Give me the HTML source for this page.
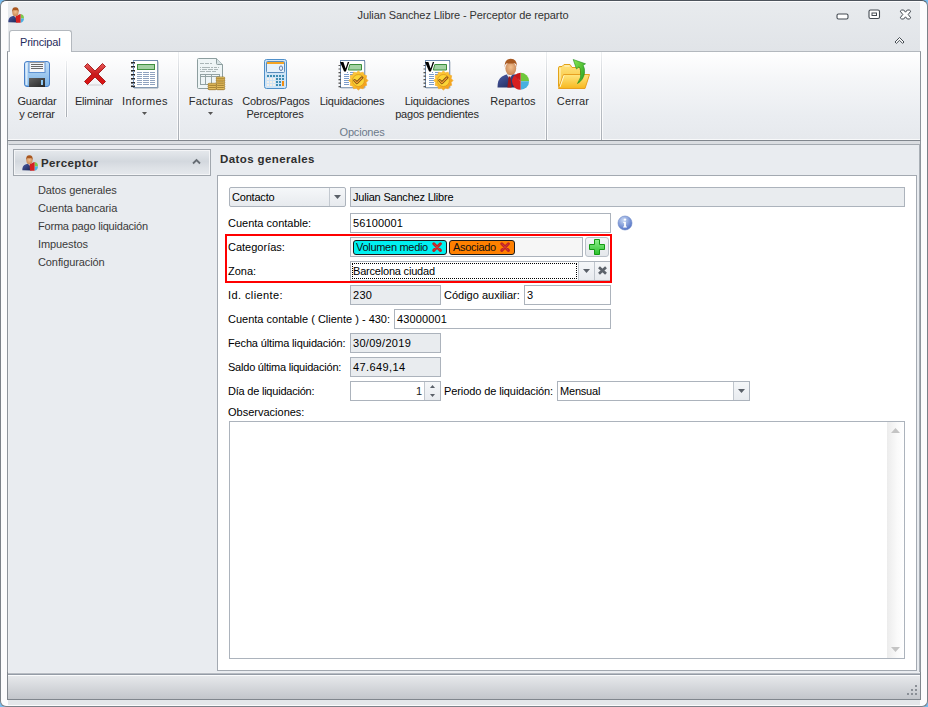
<!DOCTYPE html>
<html><head><meta charset="utf-8">
<style>
*{margin:0;padding:0;box-sizing:border-box}
html,body{width:928px;height:707px;overflow:hidden;background:#78bcef}
body{font-family:"Liberation Sans",sans-serif;font-size:11px;color:#1e1e1e;position:relative}
.a{position:absolute}
.t{position:absolute;white-space:nowrap;line-height:13px;letter-spacing:-0.2px}
.c{text-align:center}
#win{position:absolute;left:0;top:0;width:928px;height:707px;background:#fcfcfd;border:1px solid #7b8188;border-top-color:#4d545c;border-radius:6px}
#title{position:absolute;left:8px;top:2px;width:912px;height:49px;background:linear-gradient(#e8ebee,#e1e4e8)}
#ribbon{position:absolute;left:7px;top:51px;width:914px;height:90px;border-top:1px solid #b3b8be;border-left:1px solid #8e949b;border-right:1px solid #8e949b;background:linear-gradient(#ffffff 0%,#f5f6f8 30%,#eaedf1 72%,#e6e9ed calc(100% - 2px),#f8f9fa calc(100% - 2px))}
#tab{position:absolute;left:9px;top:30px;width:63px;height:22px;background:#fff;border:1px solid #b3b8be;border-bottom:none;border-radius:3px 3px 0 0}
.sep{position:absolute;width:1px;top:52px;height:88px;background:linear-gradient(#eef0f2,#c3c8ce 40%,#a9aeb5);box-shadow:1px 0 0 rgba(255,255,255,.75),-1px 0 0 rgba(255,255,255,.75)}
.rl{color:#2a2a2a}
#body{position:absolute;left:7px;top:140px;width:914px;height:535px;background:#dadde1;border-top:1px solid #80868d;border-left:1px solid #8e949b;border-right:1px solid #8e949b}
#status{position:absolute;left:7px;top:672px;width:914px;height:28px;border:1px solid #80868d;border-top:none;background:linear-gradient(#eceef1 0,#eceef1 1px,#b7bcc3 1px,#b7bcc3 2px,#959ca6 2px,#959ca6 3px,#fbfcfd 3px,#fbfcfd 4px,#e6e8eb 4px,#c3c6cb 100%)}
#strip{position:absolute;left:8px;top:700px;width:912px;height:5px;background:#e4e7ea}
#lpanel{position:absolute;left:8px;top:144px;width:912px;height:529px;border-top:1px solid #a4aab1;border-right:1px solid #a9afb6;border-left:1px solid #eef0f3;background:#e9ecf0}
#hdr{position:absolute;left:13px;top:149px;width:198px;height:27px;border:1px solid #a1a7ae;background:linear-gradient(#e6e9ed,#d3d8de 45%,#dde1e6 70%,#e6e9ed);box-shadow:inset 0 0 0 1px #f4f5f7}
#content{position:absolute;left:217px;top:175px;width:700px;height:496px;border:1px solid #a3a9b1;background:#fff}
.fld{position:absolute;height:20px;border:1px solid #acb3bc;background:#fff}
.dis{background:#e9ecef}
.ft{position:absolute;left:2px;top:2px;line-height:14px;white-space:nowrap;letter-spacing:-0.2px;color:#000}
.lbl{position:absolute;margin-left:-1px;white-space:nowrap;line-height:13px;letter-spacing:0px;color:#000}
.nav{position:absolute;left:38px;white-space:nowrap;line-height:13px;letter-spacing:-0.1px;color:#3a3a3a}
</style></head><body>
<div id="win"></div>
<div id="title"></div>
<div id="ribbon"></div>
<div id="tab"></div>
<div id="body"></div>
<div id="lpanel"></div>
<div id="status"></div>
<div id="strip"></div>
<div id="hdr"></div>
<div id="content"></div>

<!-- title text -->
<div class="t c" style="left:313px;width:300px;top:9px;color:#333;letter-spacing:-0.1px">Julian Sanchez Llibre - Perceptor de reparto</div>
<div class="t" style="left:20px;top:36px;color:#1f2d5c">Principal</div>

<!-- separators -->
<div class="sep" style="left:66px;top:61px;height:56px"></div>
<div class="sep" style="left:178px"></div>
<div class="sep" style="left:546px"></div>
<div class="sep" style="left:601px"></div>

<!-- ribbon labels -->
<div class="t c rl" style="left:-13px;width:100px;top:95px">Guardar</div>
<div class="t c rl" style="left:-13px;width:100px;top:108px">y cerrar</div>
<div class="t c rl" style="left:44px;width:100px;top:95px">Eliminar</div>
<div class="t c rl" style="left:95px;width:100px;top:95px;letter-spacing:0.4px">Informes</div>
<div class="t c rl" style="left:161px;width:100px;top:95px;letter-spacing:0.2px">Facturas</div>
<div class="t c rl" style="left:226px;width:100px;top:95px">Cobros/Pagos</div>
<div class="t c rl" style="left:225px;width:100px;top:108px">Perceptores</div>
<div class="t c rl" style="left:302px;width:100px;top:95px">Liquidaciones</div>
<div class="t c rl" style="left:387px;width:100px;top:95px">Liquidaciones</div>
<div class="t c rl" style="left:387px;width:100px;top:108px">pagos pendientes</div>
<div class="t c rl" style="left:463px;width:100px;top:95px;letter-spacing:0.1px">Repartos</div>
<div class="t c rl" style="left:523px;width:100px;top:95px;letter-spacing:0.2px">Cerrar</div>
<div class="t c" style="left:312px;width:100px;top:126px;color:#6d7a8a">Opciones</div>

<!-- left nav -->
<div class="t" style="left:41px;top:157px;font-weight:bold;color:#2e2e2e;font-size:11.5px;letter-spacing:0.4px">Perceptor</div>
<div class="nav" style="top:184px">Datos generales</div>
<div class="nav" style="top:202px">Cuenta bancaria</div>
<div class="nav" style="top:220px;letter-spacing:-0.2px">Forma pago liquidación</div>
<div class="nav" style="top:238px">Impuestos</div>
<div class="nav" style="top:256px">Configuración</div>

<div class="t" style="left:220px;top:153px;font-weight:bold;color:#2e2e2e;font-size:11.5px;letter-spacing:0.4px">Datos generales</div>

<!-- form labels -->
<div class="lbl" style="left:229px;top:217px">Cuenta contable:</div>
<div class="lbl" style="left:229px;top:241px">Categorías:</div>
<div class="lbl" style="left:229px;top:265px">Zona:</div>
<div class="lbl" style="left:229px;top:289px;letter-spacing:0.4px">Id. cliente:</div>
<div class="lbl" style="left:445px;top:289px">Código auxiliar:</div>
<div class="lbl" style="left:229px;top:313px">Cuenta contable ( Cliente ) - 430:</div>
<div class="lbl" style="left:229px;top:337px;letter-spacing:-0.15px">Fecha última liquidación:</div>
<div class="lbl" style="left:229px;top:361px;letter-spacing:-0.22px">Saldo última liquidación:</div>
<div class="lbl" style="left:229px;top:385px;letter-spacing:-0.22px">Día de liquidación:</div>
<div class="lbl" style="left:445px;top:385px;letter-spacing:-0.1px">Periodo de liquidación:</div>
<div class="lbl" style="left:229px;top:406px">Observaciones:</div>

<!-- fields -->
<div class="fld" style="left:229px;top:187px;width:117px;border-radius:2px;background:linear-gradient(#f5f7f9,#e7eaee)"><div class="ft">Contacto</div><div class="a" style="left:99px;top:0;width:1px;height:18px;background:#c3c9d0"></div></div>
<div class="fld dis" style="left:350px;top:187px;width:555px"><div class="ft">Julian Sanchez Llibre</div></div>
<div class="fld" style="left:350px;top:213px;width:261px"><div class="ft" style="letter-spacing:0.15px">56100001</div></div>
<div class="fld" style="left:350px;top:237px;width:233px;background:#f6f6f6"></div>
<div class="fld" style="left:585px;top:237px;width:24px;border-radius:3px;border-color:#b9c0c8;background:linear-gradient(#f3f5f7,#e4e7eb)"></div>
<div class="fld" style="left:350px;top:261px;width:261px"><div class="ft">Barcelona ciudad</div></div>
<div class="fld dis" style="left:350px;top:285px;width:91px"><div class="ft" style="letter-spacing:0.3px">230</div></div>
<div class="fld" style="left:524px;top:285px;width:87px"><div class="ft">3</div></div>
<div class="fld" style="left:394px;top:309px;width:217px"><div class="ft" style="letter-spacing:0.15px">43000001</div></div>
<div class="fld dis" style="left:350px;top:333px;width:91px"><div class="ft" style="letter-spacing:0.3px">30/09/2019</div></div>
<div class="fld dis" style="left:350px;top:357px;width:91px"><div class="ft" style="letter-spacing:0.4px">47.649,14</div></div>
<div class="fld" style="left:350px;top:381px;width:91px"></div>
<div class="fld" style="left:557px;top:381px;width:193px"><div class="ft">Mensual</div></div>
<div class="fld" style="left:229px;top:421px;width:676px;height:238px"></div>

<!-- red box -->
<div class="a" style="left:225px;top:234px;width:387px;height:49px;border:2px solid #f00"></div>
<!-- ICONS -->
<svg class="a" style="left:0;top:0" width="0" height="0">
<defs>
<linearGradient id="gFlop" x1="0" y1="0" x2="0" y2="1"><stop offset="0" stop-color="#c2def7"/><stop offset="1" stop-color="#7ab2e6"/></linearGradient>
<linearGradient id="gShut" x1="0" y1="0" x2="1" y2="1"><stop offset="0" stop-color="#626262"/><stop offset="1" stop-color="#262626"/></linearGradient>
<linearGradient id="gRed" x1="0" y1="0" x2="0" y2="1"><stop offset="0" stop-color="#e85a5a"/><stop offset=".5" stop-color="#c81c1c"/><stop offset="1" stop-color="#e01010"/></linearGradient>
<linearGradient id="gGold" x1="0" y1="0" x2="0" y2="1"><stop offset="0" stop-color="#fbe08a"/><stop offset="1" stop-color="#c79532"/></linearGradient>
<linearGradient id="gSeal" x1="0" y1="0" x2="1" y2="1"><stop offset="0" stop-color="#ffd040"/><stop offset=".5" stop-color="#fbbd2a"/><stop offset="1" stop-color="#f08a10"/></linearGradient>
<linearGradient id="gFold" x1="0" y1="0" x2="0" y2="1"><stop offset="0" stop-color="#ffe680"/><stop offset="1" stop-color="#f7b81e"/></linearGradient>
<linearGradient id="gBack" x1="0" y1="0" x2="0" y2="1"><stop offset="0" stop-color="#ffe27e"/><stop offset="1" stop-color="#f5bf30"/></linearGradient>
<linearGradient id="gArrow" x1="0" y1="0" x2="1" y2="1"><stop offset="0" stop-color="#8ae850"/><stop offset="1" stop-color="#1c9a1c"/></linearGradient>
<radialGradient id="gInfo" cx=".4" cy=".3" r=".8"><stop offset="0" stop-color="#c8d8f4"/><stop offset="1" stop-color="#4466c0"/></radialGradient>
<linearGradient id="gPlus" x1="0" y1="0" x2="0" y2="1"><stop offset="0" stop-color="#8ef08e"/><stop offset="1" stop-color="#2cc02c"/></linearGradient>
<linearGradient id="gNavy" x1="0" y1="0" x2="1" y2="1"><stop offset="0" stop-color="#4a5ca8"/><stop offset="1" stop-color="#1c2450"/></linearGradient>
<radialGradient id="gFace" cx=".5" cy=".4" r=".6"><stop offset="0" stop-color="#f2c08e"/><stop offset="1" stop-color="#c88656"/></radialGradient>
</defs>
</svg>

<!-- Floppy -->
<svg class="a" style="left:24px;top:61px" width="26" height="26" viewBox="0 0 26 26">
<rect x=".5" y=".5" width="25" height="25" rx="2.5" fill="url(#gFlop)" stroke="#4a80c8"/>
<rect x="1.5" y="2" width="2" height="22" fill="#eaf4fd" opacity=".8"/>
<rect x="5" y="0.5" width="16" height="11" fill="#f4f6f9" stroke="#5f92d2"/>
<rect x="5.5" y="1" width="15" height="1" fill="#9a9a9a"/>
<path d="M7 3.5h12M7 5.5h12M7 7.5h12" stroke="#6a6a6a" stroke-width="1"/>
<rect x="5" y="17" width="16" height="9" fill="url(#gShut)"/>
<rect x="17" y="19" width="2" height="5" fill="#8ec8f4"/>
</svg>

<!-- Red X -->
<svg class="a" style="left:83px;top:62px" width="24" height="24" viewBox="0 0 24 24">
<ellipse cx="12" cy="23" rx="9" ry="1.2" fill="#000" opacity=".08"/>
<path d="M1.5 4.5L4.5 1.5L12 9L19.5 1.5L22.5 4.5L15 12L22.5 19.5L19.5 22.5L12 15L4.5 22.5L1.5 19.5L9 12Z" fill="url(#gRed)" stroke="#a01414" stroke-width=".9" stroke-linejoin="round"/>
</svg>

<!-- Informes -->
<svg class="a" style="left:130px;top:59px" width="30" height="30" viewBox="0 0 30 30">
<rect x="3.5" y="1.5" width="24" height="27" fill="#fff" stroke="#6f8aac"/>
<path d="M28 2.5v26.5h-24" stroke="#9aa8b8" fill="none"/>
<rect x="7.5" y="5.5" width="17" height="5" fill="#a2d0a2" stroke="#3f8f3f"/>
<g stroke="#8fa2bf" stroke-width="1">
<path d="M7 13.5h5M13 13.5h6M20 13.5h5M7 15.5h5M13 15.5h6M20 15.5h5M7 17.5h5M13 17.5h6M20 17.5h5M7 19.5h5M13 19.5h6M20 19.5h5M7 21.5h5M13 21.5h6M20 21.5h5M7 23.5h5M13 23.5h6M20 23.5h5M7 25.5h5M13 25.5h6M20 25.5h5"/>
</g>
<g fill="#2a2a2a">
<rect x="1" y="3" width="4" height="1.6"/><rect x="1" y="7" width="4" height="1.6"/><rect x="1" y="11" width="4" height="1.6"/><rect x="1" y="15" width="4" height="1.6"/><rect x="1" y="19" width="4" height="1.6"/><rect x="1" y="23" width="4" height="1.6"/><rect x="1" y="26.5" width="4" height="1.6"/>
</g>
<path d="M3.5 2v26" stroke="#7d9fcf" stroke-dasharray="1 1"/>
</svg>

<!-- Facturas -->
<svg class="a" style="left:196px;top:57px" width="30" height="34" viewBox="0 0 30 34">
<path d="M1.5 2.5Q1.5 1.5 2.5 1.5H20.5L26.5 7.5V30.5Q26.5 31.5 25.5 31.5H2.5Q1.5 31.5 1.5 30.5Z" fill="#eef5f6" stroke="#8d9e9f"/>
<path d="M20.5 1.5V6.5Q20.5 7.5 21.5 7.5H26.5" fill="#d6e2e4" stroke="#8d9e9f"/>
<path d="M4 6.5h4M9 6.5h4M14 6.5h2M4 10.5h1M6 10.5h8M15 10.5h2M18 10.5h3M22 10.5h1M4 12.5h1M6 12.5h5M12 12.5h5M18 12.5h4M4 14.5h5M10 14.5h5M16 14.5h4" stroke="#aab6b7" stroke-width="1"/>
<rect x="4.5" y="17.5" width="19" height="10" fill="none" stroke="#93a3a4"/>
<path d="M4.5 19.5h19M9.5 17.5v10M15.5 17.5v10" stroke="#93a3a4"/>
<g stroke="#96701e" stroke-width=".7" fill="url(#gGold)">
<rect x="20.2" y="20" width="8.6" height="2.2" rx="1.1"/><rect x="20.2" y="22.1" width="8.6" height="2.2" rx="1.1"/><rect x="20.2" y="24.2" width="8.6" height="2.2" rx="1.1"/><rect x="20.2" y="26.3" width="8.6" height="2.2" rx="1.1"/><rect x="20.2" y="28.4" width="8.6" height="2.2" rx="1.1"/><rect x="20.2" y="30.5" width="8.6" height="2.2" rx="1.1"/>
<rect x="12" y="26.3" width="8.4" height="2.2" rx="1.1"/><rect x="12" y="28.4" width="8.4" height="2.2" rx="1.1"/><rect x="12" y="30.5" width="8.4" height="2.2" rx="1.1"/>
</g>
</svg>

<!-- Calculator -->
<svg class="a" style="left:263px;top:58px" width="26" height="32" viewBox="0 0 26 32">
<rect x="1.5" y="1.5" width="22" height="29" rx="2" fill="#cfe4f6" stroke="#4f90ca"/>
<rect x="3.5" y="3.5" width="18" height="11" rx="1" fill="#e6f1fb" stroke="#5a8dbd"/>
<rect x="4" y="4" width="17" height="2" fill="#f5a423"/>
<ellipse cx="18" cy="10.2" rx="1.6" ry="2.3" fill="none" stroke="#56719f" stroke-width=".9"/>
<g fill="#3f8db2">
<rect x="4" y="17" width="2" height="2"/><rect x="7" y="17" width="2" height="2"/><rect x="10" y="17" width="2" height="2"/><rect x="13" y="17" width="2" height="2"/><rect x="16" y="17" width="2" height="2"/><rect x="19" y="17" width="2" height="2"/>
<rect x="13" y="20" width="2" height="2"/><rect x="16" y="20" width="2" height="2"/><rect x="19" y="20" width="2" height="2"/>
<rect x="13" y="23" width="2" height="2"/><rect x="16" y="23" width="2" height="2"/>
<rect x="13" y="26" width="2" height="2"/><rect x="16" y="26" width="2" height="2"/>
</g>
<g fill="#f6efe8"><rect x="4" y="20" width="2" height="2"/><rect x="7" y="20" width="2" height="2"/><rect x="10" y="20" width="2" height="2"/><rect x="4" y="23" width="2" height="2"/><rect x="7" y="23" width="2" height="2"/><rect x="10" y="23" width="2" height="2"/><rect x="4" y="26" width="2" height="2"/><rect x="7" y="26" width="2" height="2"/><rect x="10" y="26" width="2" height="2"/></g>
<rect x="19" y="23" width="2" height="5" fill="#f08c10"/>
</svg>
<!-- Liquidaciones x2 -->
<svg class="a" style="left:0;top:0" width="0" height="0"><defs><symbol id="liqS" viewBox="0 0 32 32">
<rect x="3.5" y="1.5" width="24" height="27" fill="#fff" stroke="#6b89ad"/>
<path d="M28 2.5v26.5h-24" stroke="#b4bec9" fill="none"/>
<path d="M12.8 5.5h11.7v5.5h-13.2z" fill="#a3d2a3" stroke="#3a8e3a"/>
<g stroke="#7b9dcc"><path d="M10 13.5h1M13 13.5h4M7 15.5h5M13 15.5h4M7 17.5h5M7 19.5h5M7 21.5h5M7 23.5h5M7 25.5h5"/></g>
<g fill="#555"><rect x="1.5" y="6" width="2" height="1"/><rect x="1.5" y="9.5" width="2" height="1"/><rect x="1.5" y="13" width="2.5" height="1.3"/><rect x="1.5" y="16.5" width="2.5" height="1.3"/><rect x="1.5" y="20" width="2.5" height="1.3"/><rect x="1.5" y="23.5" width="2.5" height="1.3"/><rect x="1.5" y="27" width="2.5" height="1.3"/></g>
<path d="M3 3H6.4L8.6 9.6L10.8 3H12.2L8.9 12.6H7.1Z" fill="#000"/>
<polygon points="21.40,11.90 23.47,13.77 26.20,13.19 27.06,15.84 29.71,16.70 29.13,19.43 31.00,21.50 29.13,23.57 29.71,26.30 27.06,27.16 26.20,29.81 23.47,29.23 21.40,31.10 19.33,29.23 16.60,29.81 15.74,27.16 13.09,26.30 13.67,23.57 11.80,21.50 13.67,19.43 13.09,16.70 15.74,15.84 16.60,13.19 19.33,13.77" fill="url(#gSeal)" stroke="#f0a828" stroke-width=".6" stroke-linejoin="round"/>
<circle cx="21.4" cy="21.5" r="6" fill="#fcd436" stroke="#d49020" stroke-width=".7"/>
<path d="M17.6 21.4l2.3 2.4 5-5" fill="none" stroke="#7c4c12" stroke-width="2.8" stroke-linejoin="round" stroke-linecap="round"/>
<path d="M17.6 21.4l2.3 2.4 5-5" fill="none" stroke="#f7a230" stroke-width="1.2" stroke-linejoin="round" stroke-linecap="round"/>
</symbol></defs></svg>
<svg class="a" style="left:337px;top:59px" width="32" height="32"><use href="#liqS"/></svg>
<svg class="a" style="left:422px;top:59px" width="32" height="32"><use href="#liqS"/></svg>

<!-- Repartos (person + pie) -->
<svg class="a" style="left:496px;top:57px" width="34" height="34" viewBox="0 0 34 34">
<path d="M1.5 30.5Q1.5 22 6 19.5Q9 17.5 12 17L20 17.5Q23 19 23 30.5Z" fill="url(#gNavy)"/>
<path d="M10.5 17.2L13.5 22L16.5 17.2Z" fill="#f0f0f0"/>
<path d="M12.6 19.5h1.8l1.2 11h-4.2z" fill="#a01818"/>
<ellipse cx="14.8" cy="11.5" rx="5.4" ry="6.6" fill="url(#gFace)"/>
<path d="M8.6 10.5Q8.2 2 14.8 1.8Q21.4 2 21 10.5Q20.5 6.6 18.5 6.2Q14.8 7 11 6.2Q9 6.6 8.6 10.5Z" fill="#a85a22"/>
<path d="M24.6 24.2L24.6 15.7A8.5 8.5 0 0 1 33.1 24.2Z" fill="#6ec83c"/>
<path d="M24.6 24.2L33.1 24.2A8.5 8.5 0 0 1 24.6 32.7Z" fill="#48b0e0"/>
<path d="M24.6 24.2L24.6 32.7A8.5 8.5 0 0 1 18.6 18.2Z" fill="#d82020"/>
<path d="M24.6 15.7A8.5 8.5 0 0 0 18.6 18.2L24.6 24.2Z" fill="#c81818"/>
</svg>

<!-- Cerrar folder -->
<svg class="a" style="left:557px;top:57px" width="34" height="34" viewBox="0 0 34 34">
<path d="M1.5 10.5Q1.5 9.5 3 9.5H5L7 7.5H13L15 10.5H23.5V29.5H1.5Z" fill="url(#gBack)" stroke="#e3a218"/><path d="M3 11V27M7.5 9H12.5" stroke="#fff6cc" stroke-width="1"/>
<path d="M6.5 17.5H32.5L28 31.5H1.5Z" fill="url(#gFold)" stroke="#e8a020"/>
<path d="M7 18.5L3 30" stroke="#fff7d0" stroke-width="1"/>
<path d="M16.2 2.5L28.5 6.8L26.2 8.3Q27.8 11 27.5 16Q26.5 23 20.5 26.5Q25 20.5 23.5 13.5Q23 10.8 22 9.8L19.5 12Z" fill="url(#gArrow)" stroke="#1a8a1a" stroke-width=".6"/>
</svg>

<!-- Person icon 16 (title) -->
<svg class="a" style="left:0;top:0" width="0" height="0"><defs><symbol id="p16" viewBox="0 0 16 16">
<path d="M0.3 15.3Q0.2 10.4 3.4 9.4L6.4 8.5L9 9L9.5 15.6Z" fill="url(#gNavy)"/>
<path d="M6 8.6L7.4 10.8L8.6 8.8Z" fill="#f2f2f2"/>
<ellipse cx="7.4" cy="5.6" rx="3.1" ry="3.7" fill="url(#gFace)"/>
<path d="M4.2 5.6Q3.6 0.3 7.4 0.3Q11.2 0.3 10.7 5.6Q10.3 3 9 2.9Q7.4 3.4 5.8 2.9Q4.5 3.1 4.2 5.6Z" fill="#a8561e"/>
<path d="M12.6 11.4L12.6 7A4.1 4.4 0 0 1 16 11.4Z" fill="#7cc84c"/>
<path d="M12.6 11.4L16 11.4A4.1 4.4 0 0 1 12.6 15.8Z" fill="#4cb2e2"/>
<path d="M12.6 11.4L12.6 15.8Q9.5 15.8 8 15.6L7.6 9.2L9.6 8.4Q11 7.2 12.6 7Z" fill="#d42020"/>
</symbol></defs></svg>
<svg class="a" style="left:8px;top:7px" width="16" height="16"><use href="#p16"/></svg>
<svg class="a" style="left:22px;top:155px" width="16" height="16"><use href="#p16"/></svg>

<!-- ribbon dropdown arrows -->
<svg class="a" style="left:142px;top:112px" width="6" height="4" viewBox="0 0 6 4"><path d="M0 0h5l-2.5 3z" fill="#555"/></svg>
<svg class="a" style="left:208px;top:112px" width="6" height="4" viewBox="0 0 6 4"><path d="M0 0h5l-2.5 3z" fill="#555"/></svg>

<!-- title bar buttons -->
<svg class="a" style="left:836px;top:13px" width="13" height="7" viewBox="0 0 13 7"><rect x="1" y="1" width="11" height="5" rx="1.5" fill="#fff" stroke="#444b52" stroke-width="1.1"/></svg>
<svg class="a" style="left:868px;top:9px" width="13" height="11" viewBox="0 0 13 11"><rect x="1" y="1" width="10.5" height="8.5" rx="1.5" fill="#fff" stroke="#444b52" stroke-width="1.1"/><rect x="4" y="4" width="4.5" height="2.5" fill="#fff" stroke="#444b52" stroke-width="1"/></svg>
<svg class="a" style="left:899px;top:9px" width="13" height="11" viewBox="0 0 13 11"><path d="M1.2 2.2L2.7 1H4.7L6.5 3.2L8.3 1H10.3L11.8 2.2L9.2 5.5L11.8 8.8L10.3 10H8.3L6.5 7.8L4.7 10H2.7L1.2 8.8L3.8 5.5Z" fill="#fff" stroke="#444b52" stroke-width="1"/></svg>
<svg class="a" style="left:894px;top:36px" width="11" height="9" viewBox="0 0 11 9"><path d="M1 6L5.5 1.5L10 6L8.6 7.4L5.5 4.3L2.4 7.4Z" fill="#fff" stroke="#444b52" stroke-width="1"/></svg>

<!-- header chevron -->
<svg class="a" style="left:192px;top:158px" width="9" height="7" viewBox="0 0 9 7"><path d="M1 5.5L4.5 2L8 5.5" fill="none" stroke="#666c73" stroke-width="1.8"/></svg>

<!-- Contacto arrow -->
<svg class="a" style="left:334px;top:195px" width="7" height="4" viewBox="0 0 7 4"><path d="M0 0h7l-3.5 4z" fill="#5a6068"/></svg>

<!-- info icon -->
<svg class="a" style="left:617px;top:215px" width="16" height="16" viewBox="0 0 16 16">
<circle cx="8" cy="8" r="7" fill="url(#gInfo)" stroke="#6a86c6" stroke-width=".6"/>
<circle cx="8" cy="4.6" r="1.2" fill="#fff"/>
<path d="M6.3 6.8h2.6v4.6h1v1.2h-3.8v-1.2h1v-3.4h-.8z" fill="#fff"/>
</svg>

<!-- tags -->
<div class="a" style="left:353px;top:240px;width:94px;height:15px;border:1px solid #1a1a1a;border-radius:3px;background:#00f0f0"></div>
<div class="t" style="left:356px;top:241px;color:#101010;letter-spacing:-0.3px">Volumen medio</div>
<svg class="a" style="left:432px;top:242px" width="10" height="10" viewBox="0 0 10 10"><path d="M1.8 1.8L8.4 8.4M8.4 1.8L1.8 8.4" stroke="#bf2525" stroke-width="3" stroke-linecap="round"/><path d="M2.3 2.3L7.9 7.9M7.9 2.3L2.3 7.9" stroke="#d63a3a" stroke-width=".9"/></svg>
<div class="a" style="left:449px;top:240px;width:66px;height:15px;border:1px solid #1a1a1a;border-radius:3px;background:#ff8000"></div>
<div class="t" style="left:453px;top:241px;color:#101010;letter-spacing:-0.3px">Asociado</div>
<svg class="a" style="left:500px;top:242px" width="10" height="10" viewBox="0 0 10 10"><path d="M1.8 1.8L8.4 8.4M8.4 1.8L1.8 8.4" stroke="#bf2525" stroke-width="3" stroke-linecap="round"/><path d="M2.3 2.3L7.9 7.9M7.9 2.3L2.3 7.9" stroke="#d63a3a" stroke-width=".9"/></svg>

<!-- plus -->
<svg class="a" style="left:589px;top:239px" width="16" height="16" viewBox="0 0 16 16">
<path d="M5.5 0.5h5v5h5v5h-5v5h-5v-5h-5v-5h5z" fill="url(#gPlus)" stroke="#129a12" stroke-width="1" stroke-linejoin="round"/>
</svg>

<!-- zona buttons -->
<div class="a" style="left:578px;top:262px;width:32px;height:18px;background:linear-gradient(#f5f7f9,#e8ebef);border-left:1px solid #c0c6cd"></div>
<div class="a" style="left:594px;top:262px;width:1px;height:18px;background:#c0c6cd"></div>
<svg class="a" style="left:583px;top:269px" width="7" height="4" viewBox="0 0 7 4"><path d="M0 0h7l-3.5 4z" fill="#5a6068"/></svg>
<svg class="a" style="left:597px;top:266px" width="11" height="9" viewBox="0 0 11 9"><path d="M2 1.2L9 7.8M9 1.2L2 7.8" stroke="#5d636b" stroke-width="2.7"/></svg>
<div class="a" style="left:352px;top:263px;width:225px;height:16px;border:1px dotted #000"></div>

<!-- spin -->
<div class="a" style="left:424px;top:382px;width:16px;height:18px;background:linear-gradient(#f5f7f9,#e8ebef);border-left:1px solid #c0c6cd"></div>
<svg class="a" style="left:430px;top:385px" width="5" height="3" viewBox="0 0 5 3"><path d="M0 3h5l-2.5-3z" fill="#5a6068"/></svg>
<svg class="a" style="left:430px;top:394px" width="5" height="3" viewBox="0 0 5 3"><path d="M0 0h5l-2.5 3z" fill="#5a6068"/></svg>
<div class="t" style="left:416px;top:385px">1</div>

<!-- Mensual dropdown -->
<div class="a" style="left:733px;top:382px;width:16px;height:18px;background:linear-gradient(#f5f7f9,#e8ebef);border-left:1px solid #c0c6cd"></div>
<svg class="a" style="left:738px;top:389px" width="7" height="4" viewBox="0 0 7 4"><path d="M0 0h7l-3.5 4z" fill="#5a6068"/></svg>

<!-- memo scrollbar -->
<div class="a" style="left:887px;top:422px;width:17px;height:236px;background:linear-gradient(90deg,#ececec,#fafafa 60%,#fff)"></div>
<svg class="a" style="left:891px;top:428px" width="9" height="5" viewBox="0 0 9 5"><path d="M0 5h9l-4.5-5z" fill="#c4c4c4"/></svg>
<svg class="a" style="left:891px;top:647px" width="9" height="5" viewBox="0 0 9 5"><path d="M0 0h9l-4.5 5z" fill="#c4c4c4"/></svg>

<!-- grip -->
<div class="a" style="left:915px;top:685px;width:2px;height:2px;background:#8a8f96"></div>
<div class="a" style="left:911px;top:689px;width:2px;height:2px;background:#8a8f96"></div>
<div class="a" style="left:915px;top:689px;width:2px;height:2px;background:#8a8f96"></div>
<div class="a" style="left:907px;top:693px;width:2px;height:2px;background:#8a8f96"></div>
<div class="a" style="left:911px;top:693px;width:2px;height:2px;background:#8a8f96"></div>
<div class="a" style="left:915px;top:693px;width:2px;height:2px;background:#8a8f96"></div>

</body></html>
